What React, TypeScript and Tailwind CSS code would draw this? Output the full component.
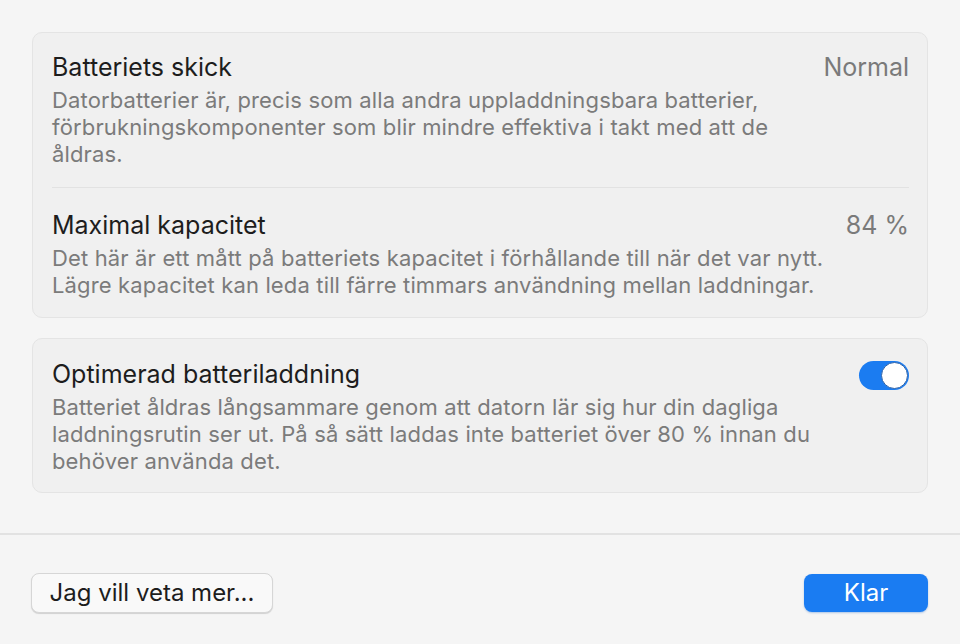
import React from "react";

function Toggle({ on }: { on: boolean }) {
  return (
    <div
      className={`relative h-[29px] w-[50px] shrink-0 rounded-full ${on ? "bg-[#1b7cf1]" : "bg-[#dcdcdc]"}`}
    >
      <div className="absolute right-[1px] top-[1px] h-[27px] w-[27px] rounded-full border border-[#2f63a8] bg-white" />
    </div>
  );
}

function Row({
  title,
  value,
  children,
}: {
  title: string;
  value?: React.ReactNode;
  children: React.ReactNode;
}) {
  return (
    <div className="flex items-start justify-between gap-[12px]">
      <div className="min-w-0 flex-1">
        <div className="text-[25px] leading-[30px] text-[#1d1d1d]">{title}</div>
        <div className="mt-[5px] text-[22px] leading-[27px] tracking-[0.15px] text-[#7b7b7b]">{children}</div>
      </div>
      {value}
    </div>
  );
}

export default function App() {
  return (
    <div
      className="flex h-[644px] w-full flex-col bg-[#f5f5f5]"
      style={{ fontFamily: "Inter, 'Noto Sans', sans-serif" }}
    >
      <div className="flex flex-col gap-[20px] px-8 pt-8">
        <section className="rounded-[10px] border border-[#e4e4e4] bg-[#f0f0f0] pb-[18px] pl-[19px] pr-[18px] pt-[19px]">
          <Row title="Batteriets skick" value={<div className="text-[25px] leading-[30px] text-[#7a7a7a]">Normal</div>}>
            Datorbatterier är, precis som alla andra uppladdningsbara batterier, förbrukningskomponenter som blir mindre effektiva i takt med att de åldras.
          </Row>
          <div className="mb-[22px] mt-[19px] h-px bg-[#e2e2e2]" />
          <Row title="Maximal kapacitet" value={<div className="text-[25px] leading-[30px] text-[#7a7a7a]">84 %</div>}>
            Det här är ett mått på batteriets kapacitet i förhållande till när det var nytt. Lägre kapacitet kan leda till färre timmars användning mellan laddningar.
          </Row>
        </section>

        <section className="rounded-[10px] border border-[#e4e4e4] bg-[#f0f0f0] pb-[17px] pl-[19px] pr-[18px] pt-[20px]">
          <Row title="Optimerad batteriladdning" value={<div className="pt-[2px]"><Toggle on /></div>}>
            Batteriet åldras långsammare genom att datorn lär sig hur din dagliga laddningsrutin ser ut. På så sätt laddas inte batteriet över 80 % innan du behöver använda det.
          </Row>
        </section>
      </div>

      <div className="mt-[40px] h-[2px] bg-[#e2e2e2]" />

      <div className="flex flex-1 items-center justify-between px-8 pt-[7px]">
        <button className="-ml-px h-10 w-[242px] rounded-[8px] border border-[#d6d6d6] bg-[#f9f9f9] text-[24px] text-[#1d1d1d] shadow-[0_1px_1px_rgba(0,0,0,0.15)]">
          Jag vill veta mer...
        </button>
        <button className="h-[38px] w-[124px] rounded-[8px] bg-[#1a7cf2] text-[24px] text-white shadow-[0_1px_2px_rgba(0,90,200,0.3)]">
          Klar
        </button>
      </div>
    </div>
  );
}
